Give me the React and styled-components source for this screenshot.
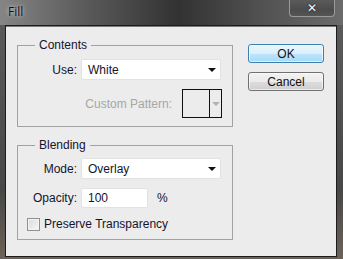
import React from "react";
import styled, { createGlobalStyle } from "styled-components";

const Global = createGlobalStyle`
  html, body { margin: 0; padding: 0; background: #3a3a3a; }
  body { font-family: "Liberation Sans", Arial, sans-serif; }
`;

const Window = styled.div`
  width: 343px;
  height: 259px;
  display: flex;
  flex-direction: column;
  background: linear-gradient(90deg, #6e6e6e 0%, #4a4a4a 20%, #303030 50%, #4a4a4a 75%, #6a6a6a 100%);
  box-sizing: border-box;
  overflow: hidden;
`;

const TitleBar = styled.div`
  height: 25px;
  flex: none;
  display: flex;
  align-items: flex-start;
  justify-content: space-between;
  background: linear-gradient(90deg, #858585 0%, #5a5a5a 25%, #323232 52%, #505050 75%, #6b6b6b 100%);
`;

const Title = styled.span`
  margin: 5px 0 0 8px;
  font-family: "Open Sans", "Liberation Sans", sans-serif;
  font-size: 12px;
  line-height: 14px;
  color: #1a0c22;
  text-shadow: 0 0 6px rgba(255, 255, 255, 0.55), 0 0 3px rgba(255, 255, 255, 0.5);
`;

const CloseButton = styled.div`
  width: 46px;
  height: 17px;
  margin-right: 8px;
  box-sizing: border-box;
  border: 1px solid #9a9a9a;
  border-top: none;
  border-radius: 0 0 4px 4px;
  background: linear-gradient(180deg, #5a5a5a, #4c4c4c 60%, #555);
  display: flex;
  align-items: center;
  justify-content: center;
  color: #f4f4f4;
  font-family: "DejaVu Sans", sans-serif;
  font-weight: bold;
  font-size: 12px;
  line-height: 12px;
  text-shadow: 0 0 2px #222;
`;

const Frame = styled.div`
  flex: 1;
  display: flex;
  padding: 0 6px 2px 5px;
  background: linear-gradient(180deg, #5a5a5a 0%, #474747 70%, #6d6257 100%);
`;

const Client = styled.div`
  flex: 1;
  box-sizing: border-box;
  border: 1px solid #1c1c1c;
  box-shadow: inset 0 1px 0 #7a7a7a;
  background: #ececec;
  display: flex;
  gap: 15px;
  padding: 12px 11px 0 11px;
  color: #14142c;
  font-size: 12px;
`;

const LeftColumn = styled.div`
  width: 216px;
  display: flex;
  flex-direction: column;
  gap: 11px;
`;

const Group = styled.fieldset`
  margin: 0;
  padding: 0 10px ${(p) => p.$bottom}px 0;
  border: 1px solid #a2a2a2;
  display: flex;
  flex-direction: column;
  min-width: 0;
`;

const Legend = styled.legend`
  margin-left: 17px;
  padding: 0 4px;
  font-size: 12px;
  line-height: 14px;
  color: #14142c;
`;

const Row = styled.div`
  display: grid;
  grid-template-columns: 59px auto;
  column-gap: 4px;
  align-items: center;
  margin-top: ${(p) => p.$top}px;
`;

const Label = styled.label`
  text-align: right;
  white-space: nowrap;
  color: ${(p) => (p.$disabled ? "#a6a6a6" : "#14142c")};
`;

const Select = styled.div`
  width: 140px;
  height: 21px;
  box-sizing: border-box;
  border: 1px solid #e2e2e2;
  border-radius: 2px;
  background: #fff;
  display: flex;
  align-items: center;
  justify-content: space-between;
  padding: 0 4px 0 6px;
`;

const Arrow = styled.span`
  width: 0;
  height: 0;
  border-left: 4px solid transparent;
  border-right: 4px solid transparent;
  border-top: 4px solid ${(p) => p.$color || "#111"};
`;

const PatternRow = styled.div`
  display: flex;
  justify-content: flex-end;
  align-items: center;
  gap: 10px;
  margin-top: 9px;
`;

const PatternBox = styled.div`
  width: 40px;
  height: 29px;
  box-sizing: border-box;
  border: 1px solid #111;
  display: flex;
`;

const PatternSwatch = styled.div`
  width: 26px;
  border-right: 1px solid #111;
`;

const PatternArrow = styled.div`
  flex: 1;
  display: flex;
  align-items: center;
  justify-content: center;
`;

const InputRow = styled.div`
  display: flex;
  align-items: center;
  gap: 9px;
`;

const TextInput = styled.div`
  width: 67px;
  height: 20px;
  box-sizing: border-box;
  border: 1px solid #e2e2e2;
  border-radius: 2px;
  background: #fff;
  display: flex;
  align-items: center;
  padding-left: 6px;
`;

const CheckRow = styled.div`
  display: flex;
  align-items: center;
  gap: 4px;
  margin: 9px 0 0 9px;
`;

const CheckBox = styled.span`
  width: 13px;
  height: 13px;
  box-sizing: border-box;
  border: 1px solid #8e8f8f;
  background: linear-gradient(135deg, #dcdcdc, #f6f6f6);
  box-shadow: inset 0 0 0 1px #f4f4f4;
`;

const ButtonColumn = styled.div`
  display: flex;
  flex-direction: column;
  gap: 9px;
  padding-top: 6px;
`;

const Button = styled.div`
  width: 76px;
  height: 19px;
  box-sizing: border-box;
  border: 1px solid ${(p) => (p.$primary ? "#3c7fb1" : "#707070")};
  border-radius: 3px;
  background: ${(p) =>
    p.$primary
      ? "linear-gradient(180deg, #eaf6fd 0%, #d9f0fc 50%, #bee6fd 51%, #a7d9f5 100%)"
      : "linear-gradient(180deg, #f2f2f2 0%, #ebebeb 50%, #dddddd 51%, #cfcfcf 100%)"};
  box-shadow: inset 0 0 0 1px rgba(255, 255, 255, 0.6);
  display: flex;
  align-items: center;
  justify-content: center;
  color: #111;
  font-size: 12px;
`;

export default function App() {
  return (
    <>
      <Global />
      <Window>
        <TitleBar>
          <Title>Fill</Title>
          <CloseButton>✕</CloseButton>
        </TitleBar>
        <Frame>
          <Client>
            <LeftColumn>
              <Group $bottom={8}>
                <Legend>Contents</Legend>
                <Row $top={7}>
                  <Label>Use:</Label>
                  <Select>
                    <span>White</span>
                    <Arrow />
                  </Select>
                </Row>
                <PatternRow>
                  <Label $disabled>Custom Pattern:</Label>
                  <PatternBox>
                    <PatternSwatch />
                    <PatternArrow>
                      <Arrow $color="#b0b0b0" />
                    </PatternArrow>
                  </PatternBox>
                </PatternRow>
              </Group>
              <Group $bottom={8}>
                <Legend>Blending</Legend>
                <Row $top={6}>
                  <Label>Mode:</Label>
                  <Select>
                    <span>Overlay</span>
                    <Arrow />
                  </Select>
                </Row>
                <Row $top={9}>
                  <Label>Opacity:</Label>
                  <InputRow>
                    <TextInput>100</TextInput>
                    <span>%</span>
                  </InputRow>
                </Row>
                <CheckRow>
                  <CheckBox />
                  <span>Preserve Transparency</span>
                </CheckRow>
              </Group>
            </LeftColumn>
            <ButtonColumn>
              <Button $primary>OK</Button>
              <Button>Cancel</Button>
            </ButtonColumn>
          </Client>
        </Frame>
      </Window>
    </>
  );
}
